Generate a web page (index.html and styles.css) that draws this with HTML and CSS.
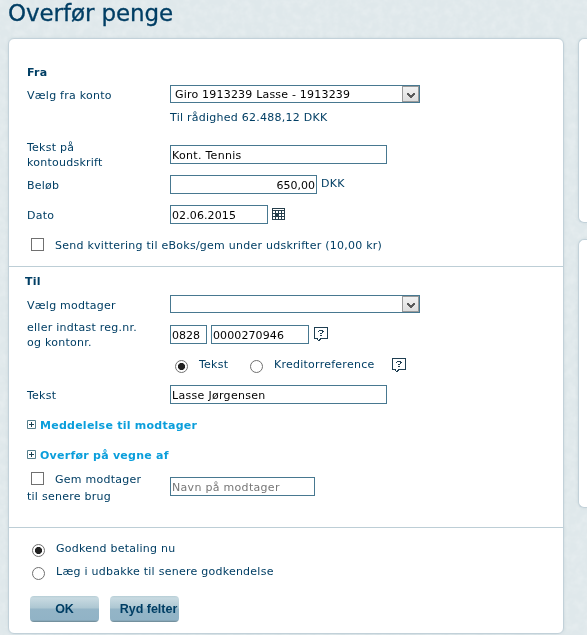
FILE: index.html
```html
<!DOCTYPE html>
<html lang="da">
<head>
<meta charset="utf-8">
<title>Overfør penge</title>
<link rel="stylesheet" href="styles.css">
</head>
<body>
<svg class="paper" aria-hidden="true"><filter id="grain"><feTurbulence type="fractalNoise" baseFrequency="0.13" numOctaves="3" seed="4"/><feColorMatrix values="0 0 0 0 1  0 0 0 0 1  0 0 0 0 1  1.2 0 0 0 -0.38"/></filter><rect width="100%" height="100%" filter="url(#grain)"/></svg>
<svg class="defs" aria-hidden="true">
  <symbol id="help" viewBox="0 0 14 14"><path d="M0 0h14v12H7v1H6v1H4v-1H3v-1H0z" fill="#1f3f52"/><path d="M1 1h12v10H6v1H5v1H4v-2H1z" fill="#fff"/><path d="M5 3h4v1H5zM4 4h1v1H4zM8 4h2v1H8zM8 5h1v1H8zM6 6h2v1H6zM6 8h2v1H6z" fill="#1f3f52"/></symbol>
  <symbol id="plus" viewBox="0 0 9 9"><path d="M.5.5h8v8h-8z" fill="#fff" stroke="#557f8d"/><path d="M2 4h5v1H2zM4 2h1v5H4z" fill="#173f50"/></symbol>
</svg>
<h1>Overfør penge</h1>
<div class="columns">
  <form class="panel">
    <section class="from">
      <h2>Fra</h2>
      <div class="row account"><label>Vælg fra konto</label><div class="select"><span>Giro 1913239 Lasse - 1913239</span><i><svg width="8" height="6" viewBox="0 0 8 6"><path d="M0 0h2v1h1v1h2V1h1V0h2v2H7v1H6v1H5v1H3V4H2V3H1V2H0z" fill="#5a5a5a"/></svg></i></div></div>
      <p class="balance">Til rådighed 62.488,12 DKK</p>
      <div class="row statement"><label>Tekst på<br>kontoudskrift</label><input class="wide" value="Kont. Tennis"></div>
      <div class="row"><label>Beløb</label><div class="fields"><input class="amount" value="650,00"><span class="currency">DKK</span></div></div>
      <div class="row"><label>Dato</label><div class="fields"><input class="date" value="02.06.2015"><svg class="calendar" width="13" height="12" viewBox="0 0 13 12"><path d="M0 0h13v12H0z" fill="#263f4c"/><path d="M1 1h11v1H1zM1 3h2v2H1zM4 3h2v2H4zM7 3h2v2H7zM10 3h2v2h-2zM1 6h2v2H1zM7 6h2v2H7zM10 6h2v2h-2zM1 9h2v2H1zM4 9h2v2H4zM7 9h2v2H7zM10 9h2v2h-2z" fill="#fff"/></svg></div></div>
      <label class="check"><input type="checkbox"><span>Send kvittering til eBoks/gem under udskrifter (10,00 kr)</span></label>
    </section>
    <section class="to">
      <h2>Til</h2>
      <div class="row recipient"><label>Vælg modtager</label><div class="select"><span></span><i><svg width="8" height="6" viewBox="0 0 8 6"><path d="M0 0h2v1h1v1h2V1h1V0h2v2H7v1H6v1H5v1H3V4H2V3H1V2H0z" fill="#5a5a5a"/></svg></i></div></div>
      <div class="row number"><label>eller indtast reg.nr.<br>og kontonr.</label><div class="fields"><input class="reg" value="0828"><input class="konto" value="0000270946"><svg class="help"><use href="#help"/></svg></div></div>
      <div class="kinds"><label><input type="radio" name="kind" checked><span>Tekst</span></label><label><input type="radio" name="kind"><span>Kreditorreference</span></label><svg class="help"><use href="#help"/></svg></div>
      <div class="row text"><label>Tekst</label><input class="wide" value="Lasse Jørgensen"></div>
      <a class="more"><svg><use href="#plus"/></svg>Meddelelse til modtager</a>
      <a class="more"><svg><use href="#plus"/></svg>Overfør på vegne af</a>
      <div class="row save"><div><label class="check"><input type="checkbox"><span>Gem modtager</span></label><span class="later">til senere brug</span></div><input class="name" placeholder="Navn på modtager"></div>
    </section>
    <section class="finish">
      <label class="choice"><input type="radio" name="when" checked><span>Godkend betaling nu</span></label>
      <label class="choice"><input type="radio" name="when"><span>Læg i udbakke til senere godkendelse</span></label>
      <div class="buttons"><button type="button">OK</button><button type="button" class="reset">Ryd felter</button></div>
    </section>
  </form>
  <aside><div class="panel side-top"></div><div class="panel side-bottom"></div></aside>
</div>
</body>
</html>
```
FILE: styles.css
```css
* { box-sizing: border-box; }
html, body { margin: 0; height: 635px; overflow: hidden; }
body { background: #dfe8eb; color: #003e64; font: 11px/15px Verdana, "DejaVu Sans", sans-serif; letter-spacing: .25px; }
.paper { position: fixed; inset: 0; width: 100%; height: 100%; z-index: -1; opacity: .32; }
.defs { position: absolute; width: 0; height: 0; }
h1 { margin: 0; height: 38px; padding-left: 8px; font: 400 23px/27px "DejaVu Sans", sans-serif; letter-spacing: -.1px; white-space: nowrap; -webkit-text-stroke: .3px #003e64; }
h2 { margin: 0; font-size: 11px; line-height: 15px; font-weight: 700; }
p { margin: 0; }
.columns { display: flex; gap: 14px; padding-left: 8px; }
.panel { background: #fff; border: 1px solid #c2d1d9; border-radius: 6px; box-shadow: 0 0 3px rgba(150,175,185,.3); }
form.panel { width: 556px; height: 596px; flex: none; }
aside { display: flex; flex-direction: column; gap: 16px; width: 9px; }
aside .panel { width: 9px; border-right: 0; border-radius: 6px 0 0 6px; }
.side-top { height: 185px; }
.side-bottom { height: 269px; }
section { padding-left: 18px; }
.from { height: 227px; padding-top: 26px; }
.to { height: 261px; border-top: 1px solid #bdced6; padding-top: 7px; }
.to h2 { margin-left: -2px; }
.finish { border-top: 1px solid #bdced6; padding-top: 13px; }
.row { display: grid; grid-template-columns: 143px 1fr; height: 30px; align-items: start; }
.row > label { padding-top: 3px; }
.account { margin-top: 5px; height: 24px; }
.select { width: 250px; height: 18px; border: 1px solid #477890; display: flex; justify-content: space-between; color: #000; background: #fff; }
.select span { padding-left: 4px; line-height: 17px; white-space: nowrap; letter-spacing: .2px; }
.select i { width: 17px; height: 16px; border: 1px solid #999; background: linear-gradient(#f2f2f2, #dedede); display: flex; align-items: center; justify-content: center; padding-top: 3px; }
.balance { padding: 1px 0 0 143px; height: 29px; }
.statement { height: 37px; }
.statement > label { padding-top: 2px; }
.row input { height: 19px; border: 1px solid #477890; border-radius: 0; padding: 1px 1px 0; margin: 0; color: #000; background: #fff; font: inherit; letter-spacing: .3px; outline: none; }
.row input.wide { width: 217px; }
.statement input.wide { margin-top: 7px; }
.row input.amount { width: 147px; text-align: right; letter-spacing: 0; }
.row input.date, .row input.konto { width: 98px; letter-spacing: .1px; }
.row input.reg { width: 37px; margin-right: 4px; letter-spacing: 0; }
.row input.name { width: 145px; margin-top: 5px; }
input::placeholder { color: #777; opacity: 1; }
.fields { display: flex; align-items: flex-start; }
.currency { padding-left: 4px; line-height: 17px; }
.calendar { margin: 3px 0 0 4px; }
input[type=checkbox], input[type=radio] { appearance: none; flex: none; width: 13px; height: 13px; margin: 0; padding: 0; border: 1px solid #707070; background: #fff; }
input[type=radio] { border-radius: 50%; }
input[type=radio]:checked { background: radial-gradient(circle, #222 3.2px, #fff 3.9px); }
.check { display: flex; align-items: center; gap: 11px; padding-left: 4px; height: 15px; }
.from > .check { margin-top: 2px; }
.from > .check span { padding-top: 1px; }
.row .check input { width: 13px; height: 13px; border-color: #707070; padding: 0; }
.recipient { margin-top: 6px; height: 25px; }
.number { height: 38px; }
.number > label { padding-top: 0; }
.number .fields { padding-top: 5px; }
.help { width: 14px; height: 14px; flex: none; }
.number .help { margin: 2px 0 0 5px; }
.kinds { display: flex; align-items: flex-start; padding-left: 148px; height: 27px; }
.kinds label { display: flex; gap: 11px; width: 75px; }
.kinds label + label { width: 142px; }
.kinds input { margin-top: 2px; }
.kinds span { line-height: 13px; }
.text { height: 33px; }
.more { display: flex; align-items: center; gap: 4px; height: 15px; margin-bottom: 15px; color: #0a9edb; font-weight: 700; }
.more svg { width: 9px; height: 9px; position: relative; top: -1px; }
.more + .row { margin-top: -6px; height: 35px; }
.save .check { height: 13px; margin-bottom: 2px; }
.save .check span { padding-top: 1px; }
.later { display: block; padding-top: 2px; }
.choice { display: flex; gap: 11px; height: 23px; padding-left: 5px; }
.choice input { margin-top: 3px; }
.buttons { display: flex; gap: 11px; padding: 9px 0 0 3px; }
button { width: 69px; height: 26px; padding: 0; border: 0; border-radius: 4px; color: #003e64; font: 700 12.5px/25px "Liberation Sans", sans-serif; white-space: nowrap; background: linear-gradient(#b6cdd6 0, #c8dae1 2px, #adc7d2 12px, #94b5c7 13px, #91b3c6 24px, #7f9dac 25px, #688490 26px); }
.reset { padding-left: 8px; }
```
